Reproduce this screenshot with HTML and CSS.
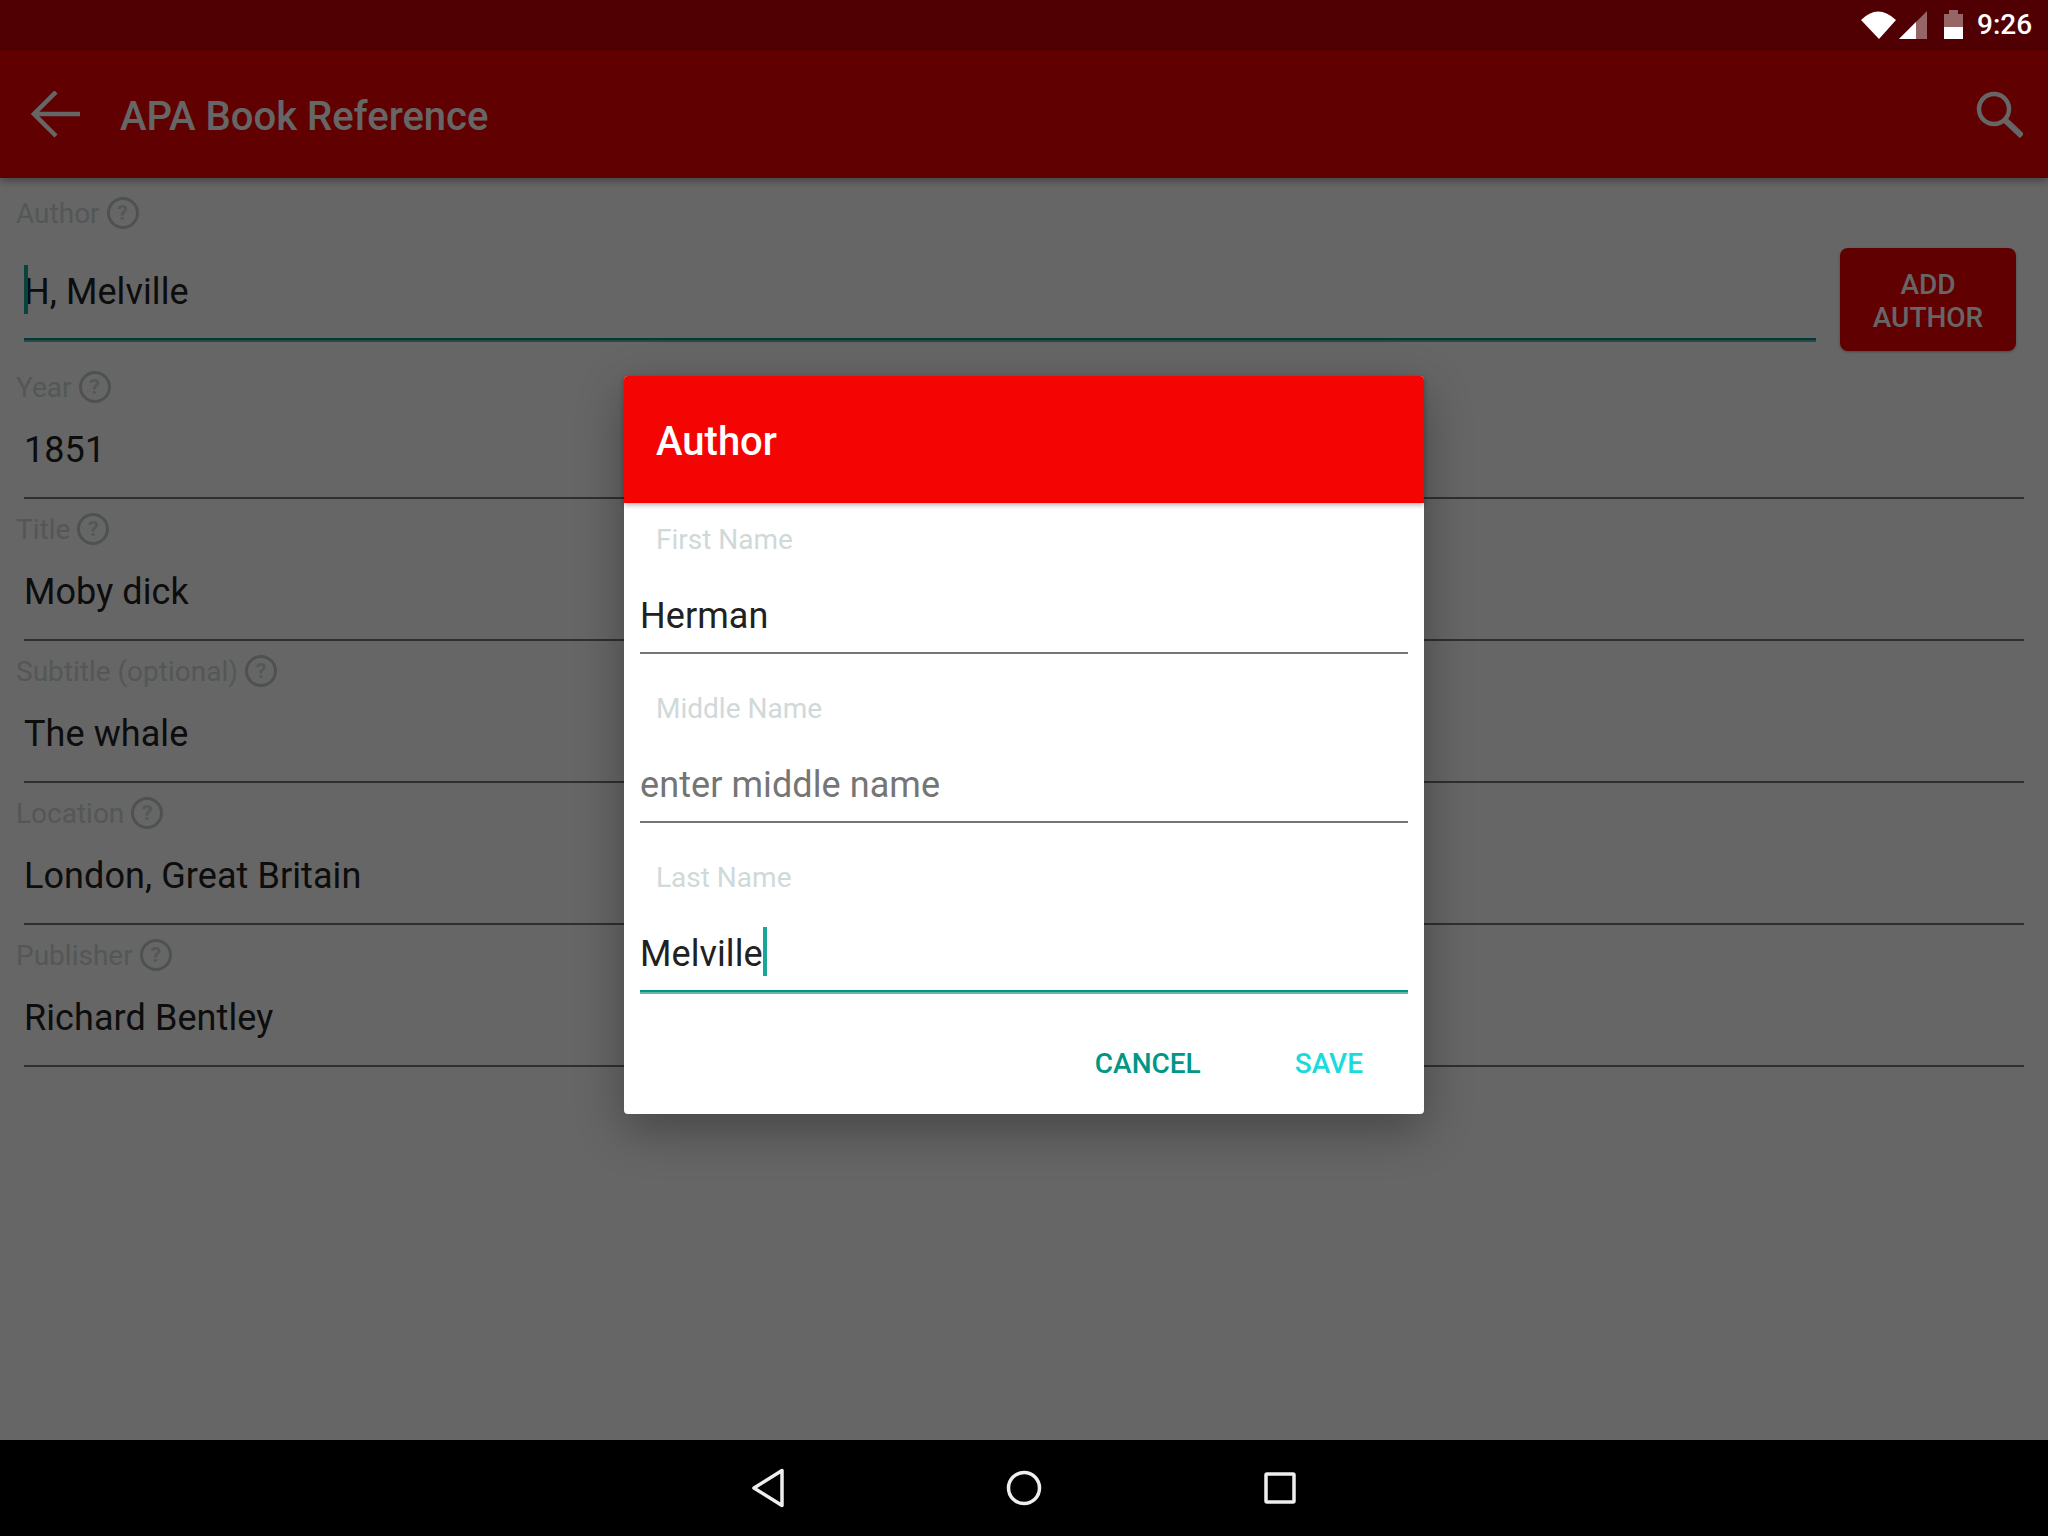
FILE: index.html
```html
<!DOCTYPE html>
<html lang="en">
<head>
    <meta charset="UTF-8">
    <title>APA Book Reference</title>
    <link rel="stylesheet" href="styles.css">
</head>
<body>
  <div class="device">
    <div class="status-bar">
      <svg class="status-icons" width="110" height="50" viewBox="0 0 110 50">
        <path fill="#fff" d="M0 20 Q17 3 35 20 L18 39 Z"/>
        <path fill="#fff" fill-opacity=".4" d="M38 39 L66 11 V39 Z"/>
        <path fill="#fff" d="M38 39 L55 22 V39 Z"/>
        <path fill="#fff" fill-opacity=".4" d="M83 14 H88 V10 H97 V14 H102 V27 H83 Z"/>
        <rect fill="#fff" x="83" y="27" width="19" height="12"/>
      </svg>
      <span class="status-time">9:26</span>
    </div>

    <header class="app-bar">
      <svg class="back-icon" width="50" height="48" viewBox="0 0 50 48">
        <path d="M49 23 H3 M25 1 L3 23 L25 45" fill="none" stroke="#fff" stroke-width="4.500"/>
      </svg>
      <h1 class="app-title">APA Book Reference</h1>
      <svg class="search-icon" width="48" height="48" viewBox="0 0 48 48">
        <circle cx="19" cy="19" r="15" fill="none" stroke="#fff" stroke-width="4.500"/>
        <path d="M30 30 L47 46" fill="none" stroke="#fff" stroke-width="6"/>
      </svg>
    </header>

    <main class="form">
      <section class="field field-author">
        <div class="field-label">Author <span class="help">?</span></div>
        <div class="author-row">
          <div class="field-value focused"><i class="caret caret-start"></i>H, Melville</div>
          <button class="add-author">ADD<br>AUTHOR</button>
        </div>
      </section>
      <section class="field">
        <div class="field-label">Year <span class="help">?</span></div>
        <div class="field-value">1851</div>
      </section>
      <section class="field">
        <div class="field-label">Title <span class="help">?</span></div>
        <div class="field-value">Moby dick</div>
      </section>
      <section class="field">
        <div class="field-label">Subtitle (optional) <span class="help">?</span></div>
        <div class="field-value">The whale</div>
      </section>
      <section class="field">
        <div class="field-label">Location <span class="help">?</span></div>
        <div class="field-value">London, Great Britain</div>
      </section>
      <section class="field">
        <div class="field-label">Publisher <span class="help">?</span></div>
        <div class="field-value">Richard Bentley</div>
      </section>
    </main>

    <div class="nav-bar">
      <svg width="48" height="48" viewBox="0 0 48 48">
        <path d="M10 24 L38 6.500 V41.500 Z" fill="none" stroke="#eee" stroke-width="3.500" stroke-linejoin="round"/>
      </svg>
      <svg width="48" height="48" viewBox="0 0 48 48">
        <circle cx="24" cy="24" r="15.500" fill="none" stroke="#eee" stroke-width="3.500"/>
      </svg>
      <svg width="48" height="48" viewBox="0 0 48 48">
        <rect x="10" y="10" width="28" height="28" rx="1" fill="none" stroke="#eee" stroke-width="3.500"/>
      </svg>
    </div>

    <div class="scrim">
      <div class="dialog">
        <div class="dialog-head">Author</div>
        <div class="dialog-field">
          <div class="dialog-label">First Name</div>
          <div class="dialog-input">Herman</div>
        </div>
        <div class="dialog-field">
          <div class="dialog-label">Middle Name</div>
          <div class="dialog-input placeholder">enter middle name</div>
        </div>
        <div class="dialog-field">
          <div class="dialog-label">Last Name</div>
          <div class="dialog-input active">Melville<i class="caret"></i></div>
        </div>
        <div class="dialog-actions">
          <button class="dialog-btn">CANCEL</button>
          <button class="dialog-btn save">SAVE</button>
        </div>
      </div>
    </div>
  </div>
</body>
</html>
```

FILE: styles.css
```css
* {
  box-sizing: border-box;
}
body {
  margin: 0;
  font-family: Roboto, "Liberation Sans", sans-serif;
  background: #fff;
  color: #212121;
}
button {
  font-family: inherit;
  border: 0;
  padding: 0;
}

.device {
  position: relative;
  width: 2048px;
  height: 1536px;
  display: flex;
  flex-direction: column;
  overflow: hidden;
}

/* status bar: the background dims with the scrim, the icons do not */
.status-bar {
  height: 50px;
  background: #c80008;
  display: flex;
  justify-content: flex-end;
  align-items: center;
  padding-right: 17px;
}
.status-icons,
.status-time {
  position: relative;
  z-index: 2;
}
.status-icons {
  margin-right: 6px;
}
.status-time {
  color: #fff;
  font-size: 28px;
  font-weight: 500;
  line-height: 50px;
  width: 54px;
}

.app-bar {
  height: 128px;
  background: #f00000;
  display: flex;
  align-items: center;
  padding: 2px 0 0 31px;
  box-shadow: 0 3px 8px rgba(0, 0, 0, .35);
  position: relative;
}
.back-icon {
  flex: none;
}
.app-title {
  margin: 2px 0 0 39px;
  color: #fff;
  font-size: 40px;
  font-weight: 500;
  flex: 1;
}
.search-icon {
  flex: none;
  margin: -2px 25px 0 0;
}

.form {
  flex: 1;
  background: #fff;
}
.field {
  height: 142px;
  padding-top: 9px;
}
.field-author {
  height: 181px;
  padding-top: 16px;
}
.field-label {
  height: 40px;
  padding-left: 16px;
  font-size: 28px;
  line-height: 40px;
  color: #d0d9d9;
  display: flex;
  align-items: center;
  gap: 7px;
}
.help {
  width: 32px;
  height: 32px;
  margin-top: -2px;
  border: 3px solid #c0cbcb;
  border-radius: 50%;
  font-size: 21px;
  font-weight: 700;
  line-height: 26px;
  text-align: center;
}
.field-value {
  position: relative;
  height: 91px;
  margin: 0 24px;
  line-height: 85px;
  font-size: 36px;
  letter-spacing: .08px;
  border-bottom: 2px solid #757575;
}
.author-row {
  display: flex;
  align-items: flex-start;
}
.field-value.focused {
  flex: 1;
  height: 106px;
  margin-right: 0;
  padding-top: 14px;
  line-height: 88px;
  border-bottom: 2px solid #009688;
  box-shadow: 0 2px 0 #66b5ad;
}
.add-author {
  width: 176px;
  height: 103px;
  margin: 14px 32px 0 24px;
  padding-top: 2px;
  border-radius: 8px;
  background: #f00000;
  color: #fff;
  font-size: 28px;
  font-weight: 500;
  line-height: 33px;
  box-shadow: 0 1px 3px rgba(0, 0, 0, .3);
}

.caret {
  position: absolute;
  width: 4px;
  height: 49px;
  background: #19a598;
}
.caret-start {
  left: 0;
  top: 31px;
}

.nav-bar {
  position: relative;
  z-index: 2;
  height: 96px;
  background: #000;
  display: flex;
  justify-content: center;
  align-items: center;
  gap: 208px;
}

/* dialog */
.scrim {
  position: absolute;
  top: 0;
  left: 0;
  right: 0;
  bottom: 96px;
  z-index: 1;
  padding-top: 50px;
  background: rgba(0, 0, 0, .6);
  display: flex;
  align-items: center;
  justify-content: center;
}
.dialog {
  width: 800px;
  height: 738px;
  background: #fff;
  border-radius: 4px;
  box-shadow: 0 16px 48px rgba(0, 0, 0, .32);
}
.dialog-head {
  height: 127px;
  padding-left: 32px;
  background: #f40504;
  border-radius: 4px 4px 0 0;
  color: #fff;
  font-size: 40px;
  font-weight: 500;
  line-height: 132px;
  box-shadow: 0 2px 5px rgba(0, 0, 0, .3);
}
.dialog-field {
  height: 169px;
}
.dialog-label {
  height: 65px;
  padding: 9px 0 0 32px;
  font-size: 28px;
  line-height: 56px;
  color: #d0d9d9;
}
.dialog-input {
  position: relative;
  height: 86px;
  margin: 0 16px;
  font-size: 36px;
  letter-spacing: .08px;
  line-height: 96px;
  border-bottom: 2px solid #757575;
}
.dialog-input.placeholder {
  color: #757575;
}
.dialog-input.active {
  height: 86px;
  border-bottom: 2px solid #009688;
  box-shadow: 0 2px 0 #66b5ad;
}
.dialog-input .caret {
  top: 21px;
}
.dialog-actions {
  display: flex;
  justify-content: flex-end;
  align-items: center;
  gap: 94px;
  padding: 34px 61px 0 0;
}
.dialog-btn {
  background: none;
  color: #009688;
  font-size: 28px;
  font-weight: 500;
  line-height: 40px;
}
.dialog-btn.save {
  color: #18dcdc;
}
```
